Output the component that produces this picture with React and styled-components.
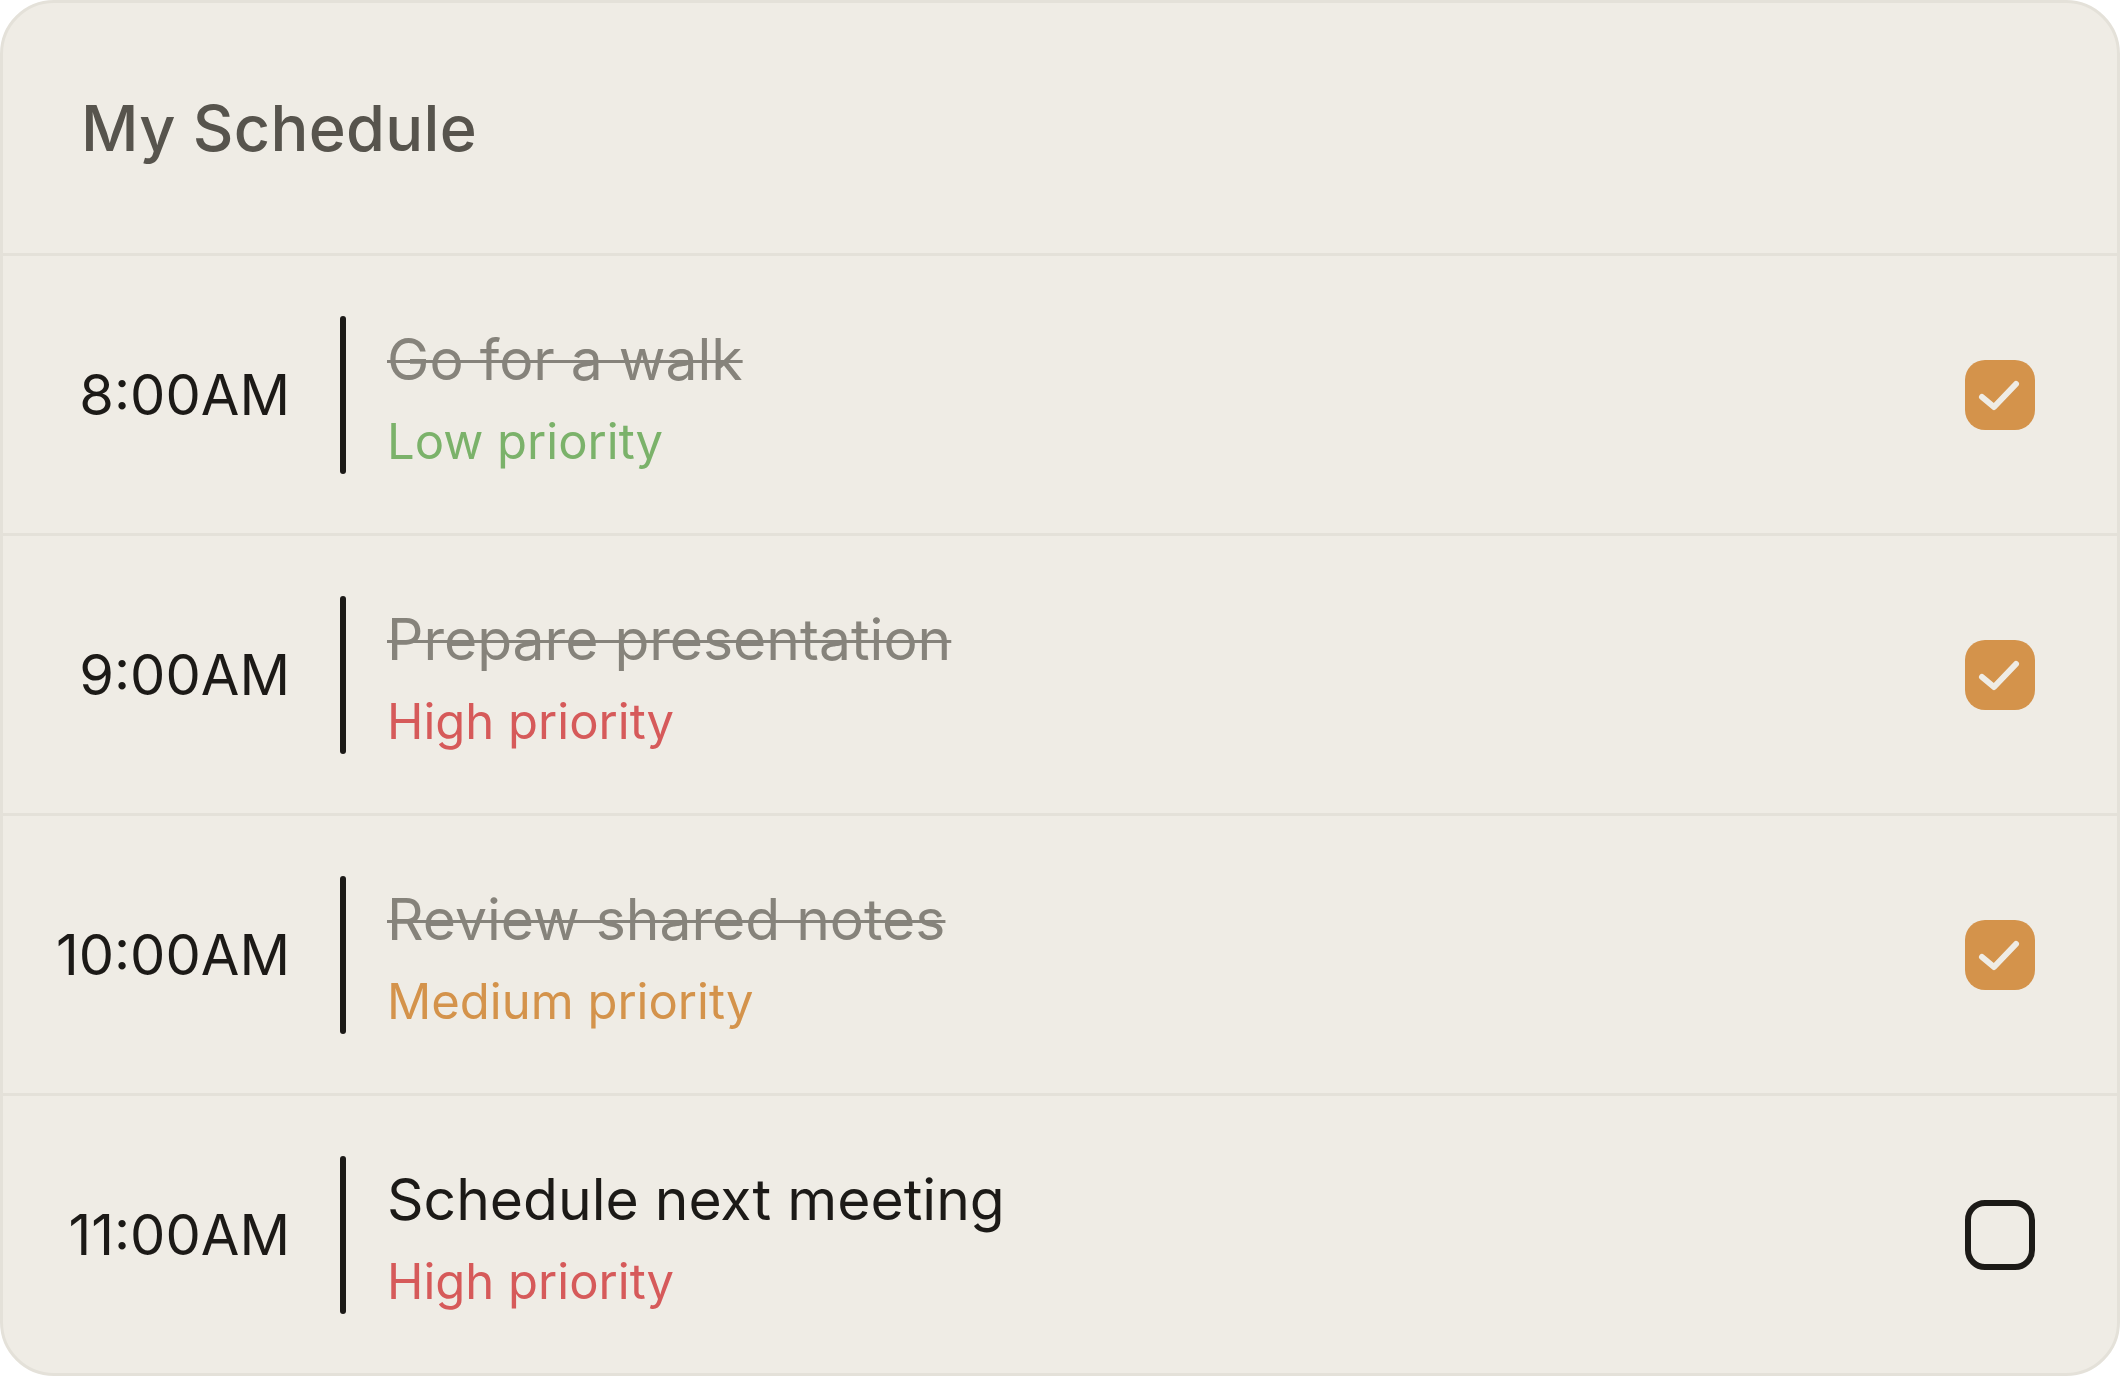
import styled, { createGlobalStyle } from 'styled-components';

const GlobalStyle = createGlobalStyle`
	html, body {
		margin: 0;
		padding: 0;
		background: #ffffff;
	}
	* {
		box-sizing: border-box;
	}
`;

const Card = styled.div`
	width: 2120px;
	height: 1376px;
	display: flex;
	flex-direction: column;
	background: #efece5;
	border: 3px solid #e4e1d9;
	border-radius: 54px;
	overflow: hidden;
	font-family: Inter, 'Liberation Sans', sans-serif;
`;

const Header = styled.header`
	height: 253px;
	flex-shrink: 0;
	display: flex;
	align-items: center;
	padding-left: 78px;
	border-bottom: 3px solid #e4e1d9;
	& > h1 {
		margin: 0;
		font-size: 63px;
		font-weight: 500;
		color: #57544d;
		letter-spacing: 0.3px;
	}
`;

const Row = styled.div`
	flex: 1;
	display: flex;
	align-items: center;
	padding-right: 82px;
	border-bottom: ${({ last }) => (last ? 'none' : '3px solid #e4e1d9')};
`;

const Time = styled.div`
	width: 287px;
	flex-shrink: 0;
	text-align: right;
	font-size: 56px;
	font-weight: 400;
	color: #1c1a17;
`;

const Bar = styled.div`
	width: 6px;
	height: 158px;
	margin: 0 41px 0 50px;
	border-radius: 3px;
	background: #1c1a17;
`;

const Task = styled.div`
	flex: 1;
	display: flex;
	flex-direction: column;
	gap: 18px;
	padding-top: 8px;
`;

const Title = styled.div`
	font-size: 57px;
	line-height: 68px;
	font-weight: 400;
	color: ${({ done }) => (done ? '#86837b' : '#1c1a17')};
	text-decoration: ${({ done }) => (done ? 'line-through' : 'none')};
	text-decoration-thickness: 3px;
`;

const priorityColors = {
	Low: '#7bb26a',
	Medium: '#d4934b',
	High: '#d65a5a',
};

const Priority = styled.div`
	font-size: 49px;
	line-height: 60px;
	color: ${({ level }) => priorityColors[level]};
`;

const Check = styled.button`
	width: 70px;
	height: 70px;
	flex-shrink: 0;
	padding: 0;
	display: flex;
	align-items: center;
	justify-content: center;
	border-radius: 20px;
	cursor: pointer;
	background: ${({ checked }) => (checked ? '#d4934b' : 'transparent')};
	border: ${({ checked }) => (checked ? 'none' : '6px solid #1c1a17')};
`;

const items = [
	{ time: '8:00AM', title: 'Go for a walk', priority: 'Low', done: true },
	{ time: '9:00AM', title: 'Prepare presentation', priority: 'High', done: true },
	{ time: '10:00AM', title: 'Review shared notes', priority: 'Medium', done: true },
	{ time: '11:00AM', title: 'Schedule next meeting', priority: 'High', done: false },
];

function App() {
	return (
		<>
			<GlobalStyle />
			<Card>
				<Header>
					<h1>My Schedule</h1>
				</Header>
				{items.map((item, i) => (
					<Row key={item.time} last={i === items.length - 1}>
						<Time>{item.time}</Time>
						<Bar />
						<Task>
							<Title done={item.done}>{item.title}</Title>
							<Priority level={item.priority}>{item.priority} priority</Priority>
						</Task>
						<Check checked={item.done} aria-label='done'>
							{item.done && (
								<svg width='70' height='70' viewBox='0 0 70 70'>
									<path
										d='M17 37 L29 47 L51 24'
										fill='none'
										stroke='#efece5'
										strokeWidth='6'
										strokeLinecap='round'
										strokeLinejoin='round'
									/>
								</svg>
							)}
						</Check>
					</Row>
				))}
			</Card>
		</>
	);
}

export default App;
